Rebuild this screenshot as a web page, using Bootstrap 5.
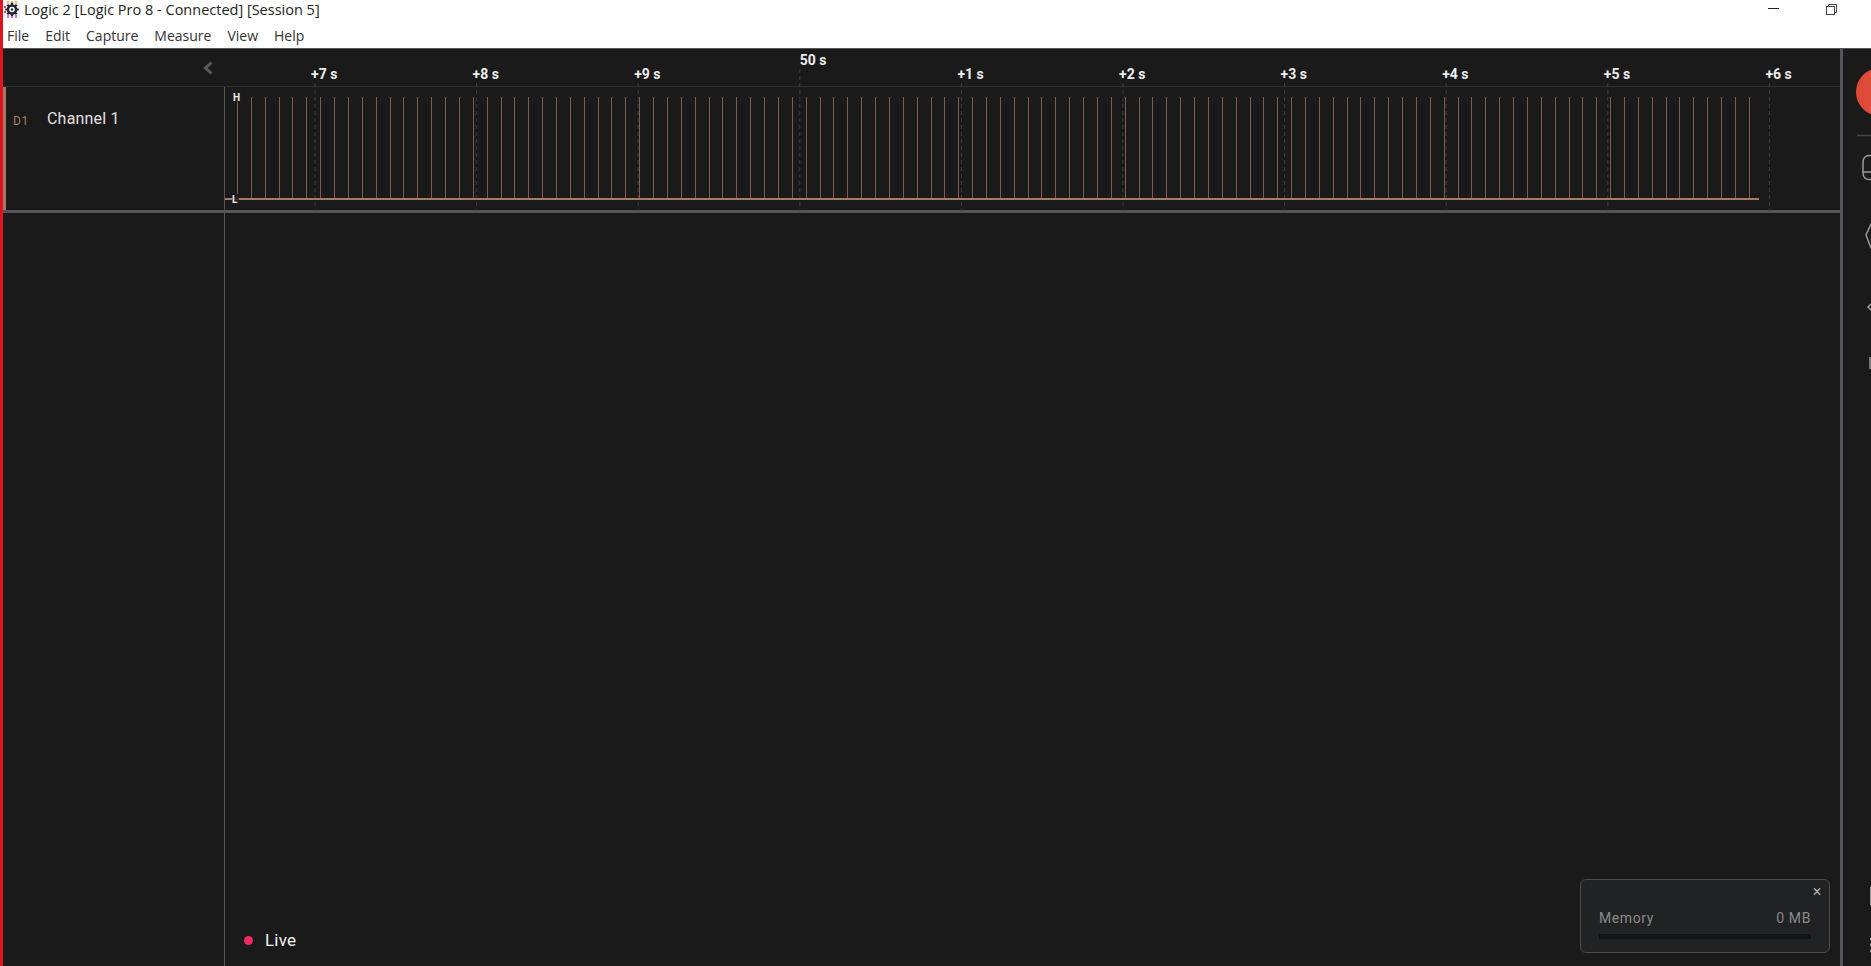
<!DOCTYPE html>
<html lang="en">
<head>
    <meta charset="UTF-8" />
    <title>Logic 2</title>
    <link href="https://cdn.jsdelivr.net/npm/bootstrap@5.3.2/dist/css/bootstrap.min.css" rel="stylesheet">
    <style>
        html, body { height: 100%; }
        body {
            background: #1a1a1a;
            border-left: 3px solid #e0141f;
            font-family: Roboto, sans-serif;
            overflow: hidden;
        }
        .title-area { background: #fff; height: 49px; border-bottom: 1px solid #55555a; font-family: "Open Sans", sans-serif; color: #222; }
        .title-row { height: 19px; padding-left: 1px; }
        .title-text { font-size: 14.5px; margin-left: 4px; white-space: nowrap; }
        .win-min { margin-left: auto; margin-right: 47px; }
        .win-restore { margin-right: 34px; }
        .menu-row { height: 29px; padding: 3px 0 0 4px; gap: 16px; font-size: 14px; color: #333; }
        .app-body { height: 917px; }
        .wave-pane { display: grid; grid-template-columns: 221px 1fr; grid-template-rows: 38px 126px 1fr; flex: 1 1 auto; min-width: 0; }
        .ruler-left { border-bottom: 1px solid #2e2e33; padding: 12px 0 0 200px; }
        .ruler-right { border-bottom: 1px solid #2e2e33; position: relative; }
        .tick-label { position: absolute; font-size: 14px; font-weight: 700; color: #eee; white-space: nowrap; line-height: 16px; }
        .channel-cell { border-bottom: 3px solid #55555a; display: flex; }
        .channel-bar { width: 3px; background: #a87a63; }
        .channel-id { color: #a87a63; font-size: 12px; letter-spacing: .5px; margin: 25px 0 0 7px; width: 34px; }
        .channel-name { color: #e2e2e2; font-size: 16px; letter-spacing: .2px; margin-top: 20px; line-height: 24px; }
        .trace-cell { border-bottom: 3px solid #55555a; border-left: 1px solid #55555a; position: relative; }
        .trace-svg { display: block; overflow: visible; position: absolute; left: 0; top: 0; }
        .level-tag { font: 700 10px Roboto, sans-serif; fill: #eee; }
        .empty-cell { border-left: 1px solid #55555a; padding: 0 10px 13px 19px; }
        .live-dot { width: 9px; height: 9px; border-radius: 50%; background: #f02a65; }
        .live-text { color: #f2f2f2; font-size: 17px; letter-spacing: .2px; margin-left: 12px; }
        .memory-box { width: 250px; height: 74px; background: #212224; border: 1px solid #4b4b50; border-radius: 6px; padding: 0 18px; position: relative; color: #8a8a8a; font-size: 14px; letter-spacing: .6px; }
        .memory-head { margin-top: 28px; line-height: 20px; }
        .memory-close { position: absolute; right: 7px; top: 4px; color: #aaa; font-size: 16px; line-height: 16px; }
        .memory-track { height: 5px; background: #141414; margin-top: 6px; }
        .pane-split { width: 3px; background: #55555a; flex: none; }
        .side-rail { width: 28px; flex: none; position: relative; overflow: hidden; }
        .rail-svg { position: absolute; left: 0; top: 0; }
    </style>
</head>
<body>
    <div class="title-area">
        <div class="title-row d-flex align-items-center">
            <svg width="16" height="17" viewBox="0 0 16 17">
                <rect x="0" y="0" width="16" height="17" rx="3" fill="#f4eef6" />
                <path d="M4 0v3M8 0v2M12 0v3" stroke="#e9b23c" stroke-width="1.500" />
                <path d="M4 14v3M8 15v2M12 14v3" stroke="#c95ad8" stroke-width="1.500" />
                <path d="M0 6h2M0 11h2" stroke="#e0141f" stroke-width="1.500" />
                <circle cx="8" cy="8.500" r="5.200" fill="#1d2530" />
                <path d="M8 1.800v13.400M1.300 8.500h13.400M3.300 3.800l9.400 9.400M12.700 3.800l-9.400 9.400" stroke="#1d2530" stroke-width="2.200" />
                <circle cx="8" cy="8.500" r="2.800" fill="#fff" />
                <circle cx="8" cy="8.500" r="1.200" fill="#1d2530" />
            </svg>
            <span class="title-text">Logic 2 [Logic Pro 8 - Connected] [Session 5]</span>
            <svg class="win-min" width="11" height="11" viewBox="0 0 11 11"><path d="M0 4.500h11" stroke="#222" /></svg>
            <svg class="win-restore" width="11" height="11" viewBox="0 0 11 11" fill="none" stroke="#444">
                <rect x=".5" y="2.500" width="8" height="8" />
                <path d="M2.500 2.500v-2h8v8h-2" />
            </svg>
        </div>
        <div class="menu-row d-flex align-items-center">
            <span>File</span><span>Edit</span><span>Capture</span><span>Measure</span><span>View</span><span>Help</span>
        </div>
    </div>

    <div class="app-body d-flex">
        <div class="wave-pane">
            <div class="ruler-left">
                <svg class="d-block" width="10" height="14" viewBox="0 0 10 14" fill="none" stroke="#5a5a5a" stroke-width="3">
                    <path d="M8.500 1.500 2.500 7l6 5.500" />
                </svg>
            </div>
            <div class="ruler-right" id="ruler"></div>
            <div class="channel-cell">
                <div class="channel-bar"></div>
                <div class="channel-id">D1</div>
                <div class="channel-name">Channel 1</div>
            </div>
            <div class="trace-cell" id="trace"></div>
            <div></div>
            <div class="empty-cell d-flex justify-content-between align-items-end">
                <div class="d-flex align-items-center">
                    <span class="live-dot"></span>
                    <span class="live-text">Live</span>
                </div>
                <div class="memory-box">
                    <span class="memory-close">&times;</span>
                    <div class="memory-head d-flex justify-content-between"><span>Memory</span><span>0 MB</span></div>
                    <div class="memory-track"></div>
                </div>
            </div>
        </div>
        <div class="pane-split"></div>
        <div class="side-rail">
            <svg class="rail-svg" width="28" height="917" viewBox="1843 49 28 917" fill="none" stroke="#9a9a9a" stroke-width="1.500">
                <circle cx="1880" cy="92" r="24" fill="#df4b39" stroke="none" />
                <path d="M1857 135.500h14" stroke="#444" />
                <path d="M1875 155.500h-6a6 6 0 0 0-6 6v12a6 6 0 0 0 6 6h6M1863 172h12" />
                <path d="M1875 222l-4 2-5 11 5 13 4 2" />
                <path d="M1871 304l-3 3 3 3" />
                <rect x="1869" y="357" width="4" height="12" fill="#777" stroke="none" />
                <rect x="1870" y="887" width="3" height="18" fill="#999" stroke="none" />
                <path d="M1870 939h3M1870 945h3M1870 951h3" stroke-width="2.500" />
            </svg>
        </div>
    </div>

    <script src="https://cdn.jsdelivr.net/npm/bootstrap@5.3.2/dist/js/bootstrap.bundle.min.js"></script>
    <script>
        // the x values are page pixels, the trace cell starts at 225
        const traceLeft = 225;
        const ticks = ['+7 s', '+8 s', '+9 s', '50 s', '+1 s', '+2 s', '+3 s', '+4 s', '+5 s', '+6 s'];
        const ruler = document.getElementById('ruler');
        const trace = document.getElementById('trace');
        let parts = '';

        ticks.forEach((label, i) => {
            const x = 315 + 161.6 * i - traceLeft;
            const main = label === '50 s';
            const tag = document.createElement('div');
            tag.className = 'tick-label';
            tag.textContent = label;
            tag.style.left = (x + (main ? 1 : -3)) + 'px';
            tag.style.top = (main ? 3 : 17) + 'px';
            ruler.appendChild(tag);
            parts += `<line x1="${x}" x2="${x}" y1="${main ? -18 : -4}" y2="124" stroke="#3d3d42" stroke-dasharray="4 3" />`;
        });

        for (let i = 0; i < 110; i++) {
            const x = Math.round(237 + 13.87 * i) + 0.5 - traceLeft;
            parts += `<line x1="${x}" x2="${x}" y1="10" y2="112" stroke="#7d5d4f" />`;
        }
        parts += `<line x1="0" x2="${1759 - traceLeft}" y1="112" y2="112" stroke="#a87a63" stroke-width="2" />`;
        parts += `<rect x="7" y="3" width="9" height="12" fill="#1a1a1a" opacity=".8" /><text class="level-tag" x="8" y="14">H</text>`;
        parts += `<rect x="7" y="107" width="7" height="12" fill="#1a1a1a" opacity=".8" /><text class="level-tag" x="7" y="116">L</text>`;
        trace.innerHTML = `<svg class="trace-svg" width="1615" height="124" viewBox="0 0 1615 124">${parts}</svg>`;
    </script>
</body>
</html>
